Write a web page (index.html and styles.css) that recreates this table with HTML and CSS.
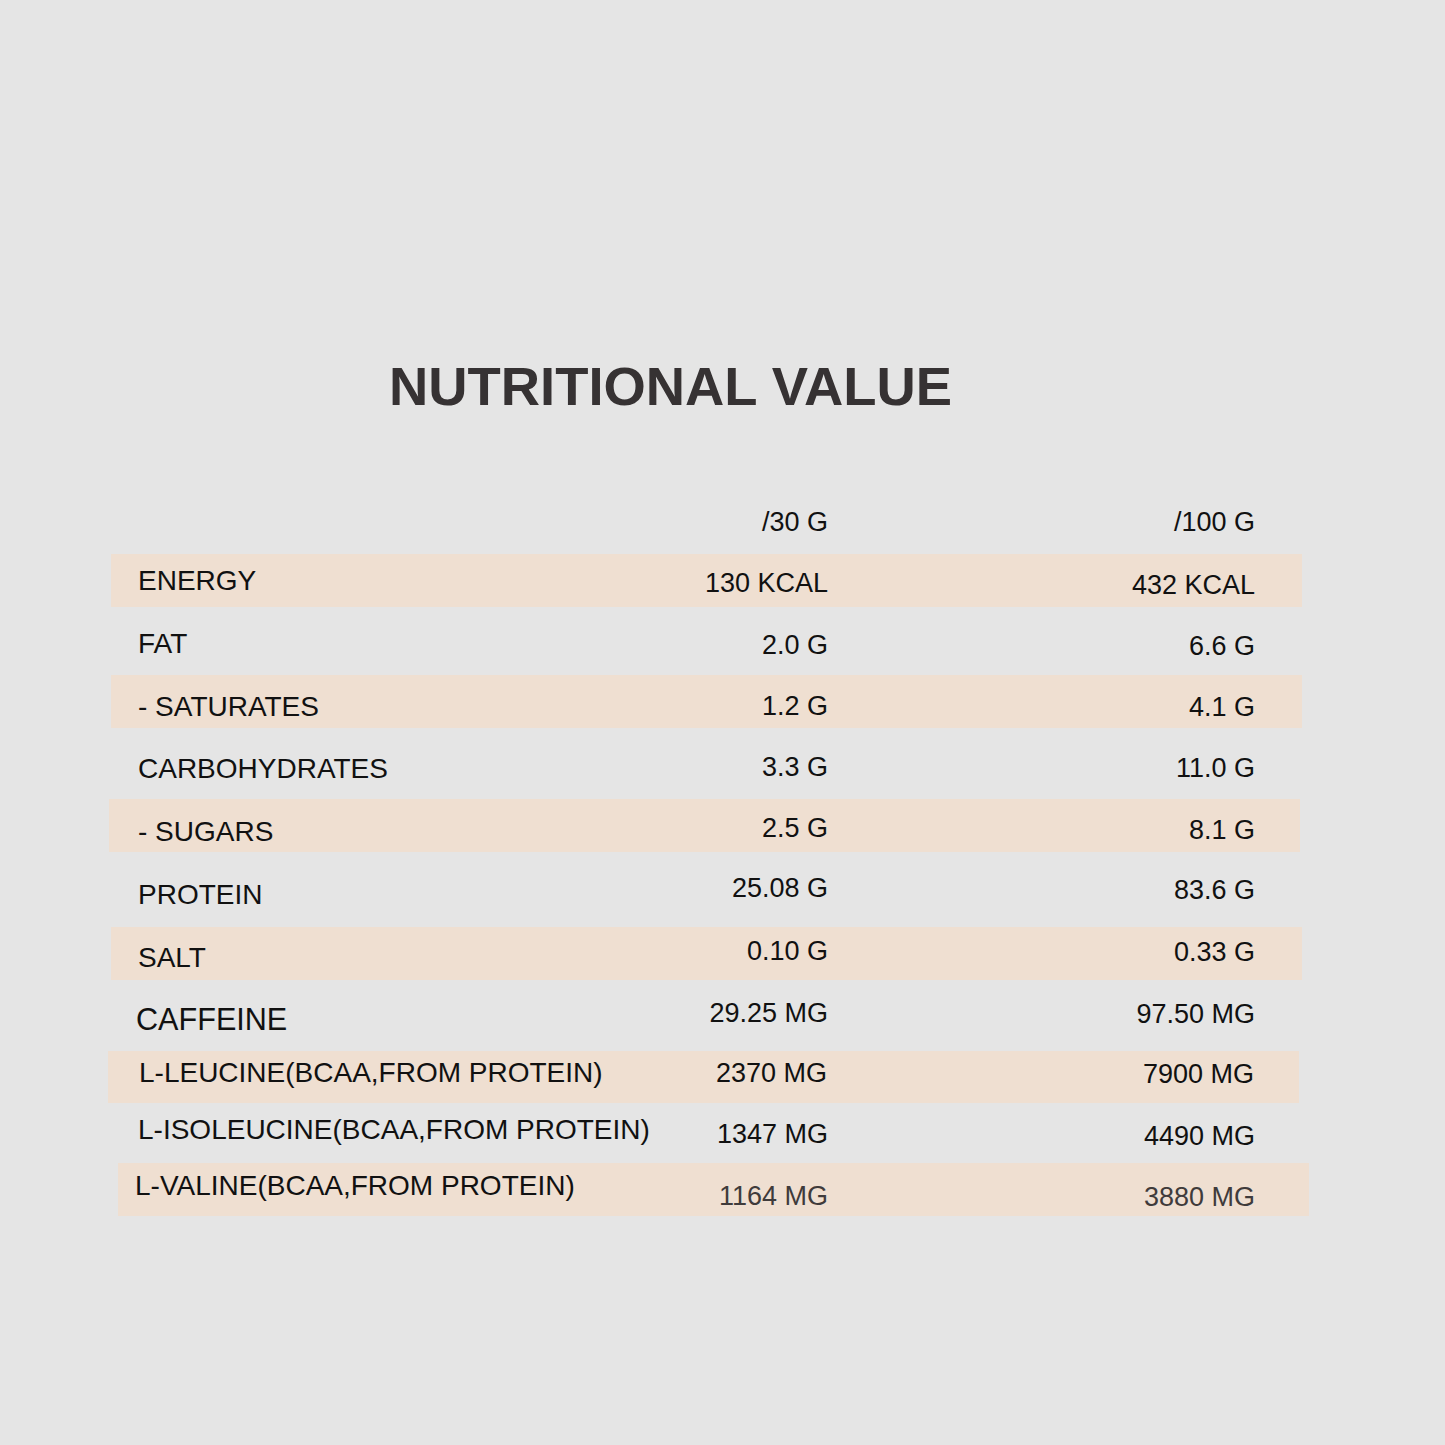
FILE: index.html
```html
<!DOCTYPE html>
<html lang="en">
<head>
<meta charset="utf-8">
<title>Nutritional Value</title>
<link rel="stylesheet" href="styles.css">
</head>
<body>
<main class="panel">
  <h1 class="title">NUTRITIONAL VALUE</h1>
  <div class="table">
    <div class="row h64">
      <span class="label"></span>
      <span class="val">/30 G</span>
      <span class="val">/100 G</span>
    </div>
    <div class="row stripe">
      <span class="label">ENERGY</span>
      <span class="val dn2">130 KCAL</span>
      <span class="val dn4">432 KCAL</span>
    </div>
    <div class="row h68">
      <span class="label dn3">FAT</span>
      <span class="val dn4">2.0 G</span>
      <span class="val dn5">6.6 G</span>
    </div>
    <div class="row stripe">
      <span class="label dn5">- SATURATES</span>
      <span class="val dn4">1.2 G</span>
      <span class="val dn5">4.1 G</span>
    </div>
    <div class="row h71">
      <span class="label dn5">CARBOHYDRATES</span>
      <span class="val dn3">3.3 G</span>
      <span class="val dn4">11.0 G</span>
    </div>
    <div class="row stripe row-sugars">
      <span class="label dn6">- SUGARS</span>
      <span class="val dn2">2.5 G</span>
      <span class="val dn4">8.1 G</span>
    </div>
    <div class="row h75">
      <span class="label dn5">PROTEIN</span>
      <span class="val up2">25.08 G</span>
      <span class="val">83.6 G</span>
    </div>
    <div class="row stripe">
      <span class="label dn4">SALT</span>
      <span class="val up3">0.10 G</span>
      <span class="val up2">0.33 G</span>
    </div>
    <div class="row h71 row-caffeine">
      <span class="label big dn3">CAFFEINE</span>
      <span class="val up3">29.25 MG</span>
      <span class="val up2">97.50 MG</span>
    </div>
    <div class="row stripe h52 row-leucine">
      <span class="label up4">L-LEUCINE(BCAA,FROM PROTEIN)</span>
      <span class="val up4">2370 MG</span>
      <span class="val up3">7900 MG</span>
    </div>
    <div class="row h60">
      <span class="label up3">L-ISOLEUCINE(BCAA,FROM PROTEIN)</span>
      <span class="val dn1">1347 MG</span>
      <span class="val dn3">4490 MG</span>
    </div>
    <div class="row stripe row-valine">
      <span class="label up4">L-VALINE(BCAA,FROM PROTEIN)</span>
      <span class="val soft dn6">1164 MG</span>
      <span class="val soft dn7">3880 MG</span>
    </div>
  </div>
</main>
</body>
</html>
```

FILE: styles.css
```css
html {
  background: #e5e5e5;
}

body {
  margin: 0;
  min-height: 1445px;
  background: #e5e5e5;
  font-family: "Liberation Sans", Arial, sans-serif;
  color: #111111;
}

.panel {
  padding-top: 360px;
}

.title {
  margin: 0 0 0 389px;
  font-size: 54.4px;
  line-height: 54px;
  font-weight: 700;
  color: #363233;
  letter-spacing: 0;
}

.table {
  margin-top: 76px;
  display: flex;
  flex-direction: column;
}

.row {
  display: grid;
  grid-template-columns: 1fr 168px 427px;
  align-items: center;
  box-sizing: border-box;
  width: 1191px;
  height: 53px;
  margin-left: 111px;
  padding: 0 47px 0 27px;
  white-space: nowrap;
}

.stripe {
  background: #efdfd1;
}

.h52 { height: 52px; }
.h60 { height: 60px; }
.h64 { height: 64px; }
.h68 { height: 68px; }
.h71 { height: 71px; }
.h75 { height: 75px; }

.row-sugars {
  margin-left: 109px;
  padding-left: 29px;
  padding-right: 45px;
}

.row-caffeine {
  padding-left: 25px;
}

.row-leucine {
  margin-left: 108px;
  padding-left: 31px;
  padding-right: 45px;
}

.row-valine {
  margin-left: 118px;
  padding-left: 17px;
  padding-right: 54px;
}

.label {
  font-size: 28px;
  line-height: 32px;
}

.label.big {
  font-size: 30.6px;
}

.val {
  font-size: 27px;
  line-height: 32px;
  text-align: right;
}

.val.soft {
  color: #3f3b3b;
}

/* small vertical nudges to follow the original artwork */
.dn1 { padding-top: 2px; }
.dn2 { padding-top: 4px; }
.dn3 { padding-top: 6px; }
.dn4 { padding-top: 8px; }
.dn5 { padding-top: 10px; }
.dn6 { padding-top: 12px; }
.dn7 { padding-top: 14px; }
.up2 { padding-bottom: 4px; }
.up3 { padding-bottom: 6px; }
.up4 { padding-bottom: 8px; }
```
